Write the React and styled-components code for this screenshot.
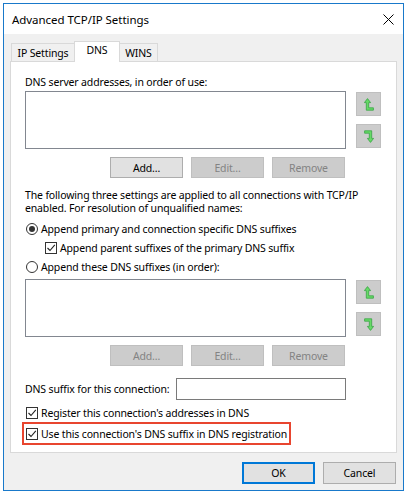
import React from "react";
import styled, { createGlobalStyle, css } from "styled-components";

const Global = createGlobalStyle`
  html, body { margin: 0; padding: 0; background: #ffffff; }
  body { font-family: "Noto Sans", "Open Sans", sans-serif; color: #000; }
  * { box-sizing: border-box; }
`;

const Window = styled.div`
  margin: 3px 0 0 3px;
  width: 401px;
  height: 488px;
  border: 1px solid #1979ca;
  display: flex;
  flex-direction: column;
  background: #fff;
`;

const TitleBar = styled.div`
  height: 30px;
  display: flex;
  align-items: center;
  padding-left: 8px;
  background: #fff;
`;

const Title = styled.div`
  flex: 1;
  font-size: 11.5px;
  letter-spacing: -0.05px;
  color: #000;
`;

const CloseBtn = styled.div`
  width: 30px;
  height: 30px;
  display: flex;
  align-items: center;
  justify-content: center;
`;

const Body = styled.div`
  flex: 1;
  background: #f0f0f0;
  padding: 7px 6px 0 6px;
  display: flex;
  flex-direction: column;
  font-size: 10.5px;
  letter-spacing: -0.15px;
  white-space: nowrap;
`;

const TabStrip = styled.div`
  height: 20px;
  display: flex;
  align-items: flex-end;
  padding-left: 1px;
`;

const Tab = styled.div`
  width: ${(p) => p.$w}px;
  height: 18px;
  border: 1px solid #d9d9d9;
  border-bottom: none;
  background: #f0f0f0;
  display: flex;
  align-items: center;
  justify-content: center;
  margin-left: -1px;
  &:first-child { margin-left: 0; }
  ${(p) =>
    p.$active &&
    css`
      height: 21px;
      margin-bottom: -1px;
      background: #fff;
      position: relative;
      z-index: 1;
      align-items: flex-start;
      padding-top: 1px;
    `}
`;

const Panel = styled.div`
  height: 392px;
  border: 1px solid #d9d9d9;
  background: #fff;
  padding: 0 13px 0 14px;
  display: flex;
  flex-direction: column;
`;

const Label = styled.div`
  line-height: 14px;
  margin-top: ${(p) => p.$mt || 0}px;
`;

const ListRow = styled.div`
  display: flex;
  gap: 10px;
  margin-top: ${(p) => p.$mt || 0}px;
`;

const ListBox = styled.div`
  width: 321px;
  height: 58px;
  border: 1px solid #828790;
  background: #fff;
`;

const ArrowCol = styled.div`
  display: flex;
  flex-direction: column;
  gap: 8px;
  padding-top: 1px;
`;

const ArrowBtn = styled.div`
  width: 25px;
  height: 24px;
  background: #cccccc;
  border: 1px solid #bfbfbf;
  display: flex;
  align-items: center;
  justify-content: center;
`;

const ButtonRow = styled.div`
  width: 321px;
  display: flex;
  justify-content: flex-end;
  gap: 8px;
  margin-top: 8px;
  padding-right: 1px;
`;

const Button = styled.div`
  width: 73px;
  height: ${(p) => p.$h || 21}px;
  display: flex;
  align-items: center;
  justify-content: center;
  background: #e1e1e1;
  border: 1px solid #adadad;
  color: #000;
  ${(p) =>
    p.$disabled &&
    css`
      background: #cccccc;
      border-color: #bfbfbf;
      color: #838383;
    `}
  ${(p) =>
    p.$default &&
    css`
      border: 2px solid #0078d7;
    `}
`;

const Paragraph = styled.div`
  line-height: 13px;
  margin-top: 11px;
`;

const OptionRow = styled.div`
  height: 19px;
  display: flex;
  align-items: center;
  gap: 3px;
  padding-left: ${(p) => p.$indent || 0}px;
  margin-top: ${(p) => p.$mt || 0}px;
`;

const Highlight = styled.div`
  align-self: flex-start;
  border: 2px solid #e8452f;
  margin-left: -3px;
  padding: 0 2px 0 1px;
`;

const Radio = styled.span`
  width: 12px;
  height: 12px;
  border-radius: 50%;
  border: 1px solid #333;
  background: #fff;
  display: flex;
  align-items: center;
  justify-content: center;
  margin-left: 1px;
  &::after {
    content: "";
    width: 6px;
    height: 6px;
    border-radius: 50%;
    background: ${(p) => (p.$on ? "#333" : "transparent")};
  }
`;

const Check = styled.span`
  width: 12px;
  height: 12px;
  border: 1px solid #333;
  background: #fff;
  display: flex;
  align-items: center;
  justify-content: center;
  margin-left: 1px;
`;

const SuffixRow = styled.div`
  display: flex;
  align-items: center;
  gap: 6px;
  margin-top: 12px;
`;

const TextInput = styled.div`
  width: 170px;
  height: 22px;
  border: 1px solid #7a7a7a;
  background: #fff;
`;

const Footer = styled.div`
  display: flex;
  justify-content: flex-end;
  gap: 8px;
  margin-top: 9px;
  padding-right: 1px;
`;

const UpIcon = ({ down }) => (
  <svg width="10" height="13" viewBox="0 0 10 13" style={down ? { transform: "rotate(180deg)" } : undefined}>
    <polygon
      points="3.5,0.6 6.6,4.6 4.7,4.6 4.7,9.8 9.4,9.8 9.4,12.2 2.3,12.2 2.3,4.6 0.4,4.6"
      fill="#66da66"
      stroke="#3aa346"
      strokeWidth="0.8"
      strokeLinejoin="round"
    />
  </svg>
);

const CheckMark = () => (
  <svg width="10" height="10" viewBox="0 0 10 10">
    <path d="M1.5 5 L4 7.5 L8.8 1.8" fill="none" stroke="#222" strokeWidth="1.1" />
  </svg>
);

const Arrows = () => (
  <ArrowCol>
    <ArrowBtn>
      <UpIcon />
    </ArrowBtn>
    <ArrowBtn>
      <UpIcon down />
    </ArrowBtn>
  </ArrowCol>
);

export default function App() {
  return (
    <>
      <Global />
      <Window>
        <TitleBar>
          <Title>Advanced TCP/IP Settings</Title>
          <CloseBtn>
            <svg width="11" height="11" viewBox="0 0 11 11">
              <path d="M0.5 0.5 L10.5 10.5 M10.5 0.5 L0.5 10.5" stroke="#000" strokeWidth="1" />
            </svg>
          </CloseBtn>
        </TitleBar>
        <Body>
          <TabStrip>
            <Tab $w={64}>IP Settings</Tab>
            <Tab $w={46} $active>DNS</Tab>
            <Tab $w={39}>WINS</Tab>
          </TabStrip>
          <Panel>
            <Label $mt={13}>DNS server addresses, in order of use:</Label>
            <ListRow $mt={2}>
              <ListBox />
              <Arrows />
            </ListRow>
            <ButtonRow>
              <Button>Add...</Button>
              <Button $disabled>Edit...</Button>
              <Button $disabled>Remove</Button>
            </ButtonRow>
            <Paragraph>
              The following three settings are applied to all connections with TCP/IP
              <br />
              enabled. For resolution of unqualified names:
            </Paragraph>
            <OptionRow $mt={4}>
              <Radio $on />
              Append primary and connection specific DNS suffixes
            </OptionRow>
            <OptionRow $indent={19}>
              <Check>
                <CheckMark />
              </Check>
              Append parent suffixes of the primary DNS suffix
            </OptionRow>
            <OptionRow>
              <Radio />
              Append these DNS suffixes (in order):
            </OptionRow>
            <ListRow $mt={3}>
              <ListBox />
              <Arrows />
            </ListRow>
            <ButtonRow>
              <Button $disabled>Add...</Button>
              <Button $disabled>Edit...</Button>
              <Button $disabled>Remove</Button>
            </ButtonRow>
            <SuffixRow>
              DNS suffix for this connection:
              <TextInput />
            </SuffixRow>
            <OptionRow $mt={3}>
              <Check>
                <CheckMark />
              </Check>
              Register this connection's addresses in DNS
            </OptionRow>
            <Highlight>
              <OptionRow>
                <Check>
                  <CheckMark />
                </Check>
                Use this connection's DNS suffix in DNS registration
              </OptionRow>
            </Highlight>
          </Panel>
          <Footer>
            <Button $h={22} $default>OK</Button>
            <Button $h={22}>Cancel</Button>
          </Footer>
        </Body>
      </Window>
    </>
  );
}
